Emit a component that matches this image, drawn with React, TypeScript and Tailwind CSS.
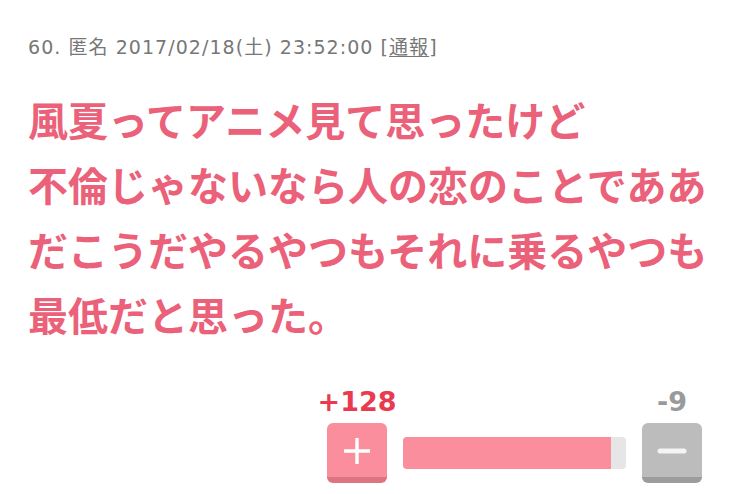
const comment = {
  no: 60,
  name: '匿名',
  date: '2017/02/18(土) 23:52:00',
  lines: [
    '風夏ってアニメ見て思ったけど',
    '不倫じゃないなら人の恋のことでああ',
    'だこうだやるやつもそれに乗るやつも',
    '最低だと思った。',
  ],
  plus: 128,
  minus: 9,
}

export default function App() {
  const ratio = comment.plus / (comment.plus + comment.minus)

  return (
    <div className="w-[750px] h-[494px] bg-white overflow-hidden font-['Noto_Sans_CJK_JP',sans-serif]">
      <div className="pl-[28px] pt-[34px]">
        <p className="text-[19px] leading-[26px] text-[#777777] font-['DejaVu_Sans','Noto_Sans_CJK_JP',sans-serif] tracking-[1.05px] whitespace-nowrap">
          {comment.no}. {comment.name} {comment.date} [<span className="underline underline-offset-2">通報</span>]
        </p>

        <div className="mt-[27px] text-[40px] leading-[65px] font-bold text-[#ea6179]">
          {comment.lines.map((line) => (
            <p key={line} className="whitespace-nowrap">{line}</p>
          ))}
        </div>
      </div>

      {/* vote buttons */}
      <div className="mt-[40px] flex justify-end pr-[48px]">
        <div className="flex items-end gap-4">
          <div className="flex flex-col items-center w-[60px]">
            <span className="text-[27px] leading-[30px] font-bold text-[#e93a50] font-['DejaVu_Sans',sans-serif] whitespace-nowrap">
              +{comment.plus}
            </span>
            <button
              type="button"
              className="mt-[6px] w-[60px] h-[60px] rounded-[6px] bg-[#fb8e9c] border-b-[6px] border-[#dc7481] flex items-center justify-center"
              aria-label="plus"
            >
              <svg width="28" height="28" viewBox="0 0 28 28" className="mt-[2px]">
                <path d="M14 1v26M1 14h26" stroke="#fff" strokeWidth={3.4} />
              </svg>
            </button>
          </div>

          <div className="mb-[14px] w-[223px] h-[32px] rounded-[4px] bg-[#e6e6e6] overflow-hidden">
            <div className="h-full bg-[#fb8e9c]" style={{ width: `${ratio * 100}%` }} />
          </div>

          <div className="flex flex-col items-center w-[60px]">
            <span className="text-[27px] leading-[30px] font-bold text-[#9a9a9a] font-['DejaVu_Sans',sans-serif]">
              -{comment.minus}
            </span>
            <button
              type="button"
              className="mt-[6px] w-[60px] h-[60px] rounded-[6px] bg-[#bcbcbc] border-b-[6px] border-[#9c9c9c] flex items-center justify-center"
              aria-label="minus"
            >
              <svg width="30" height="8" viewBox="0 0 30 8" className="mt-[2px]">
                <path d="M3 4h24" stroke="#f4f4f4" strokeWidth={5} strokeLinecap="round" />
              </svg>
            </button>
          </div>
        </div>
      </div>
    </div>
  )
}
